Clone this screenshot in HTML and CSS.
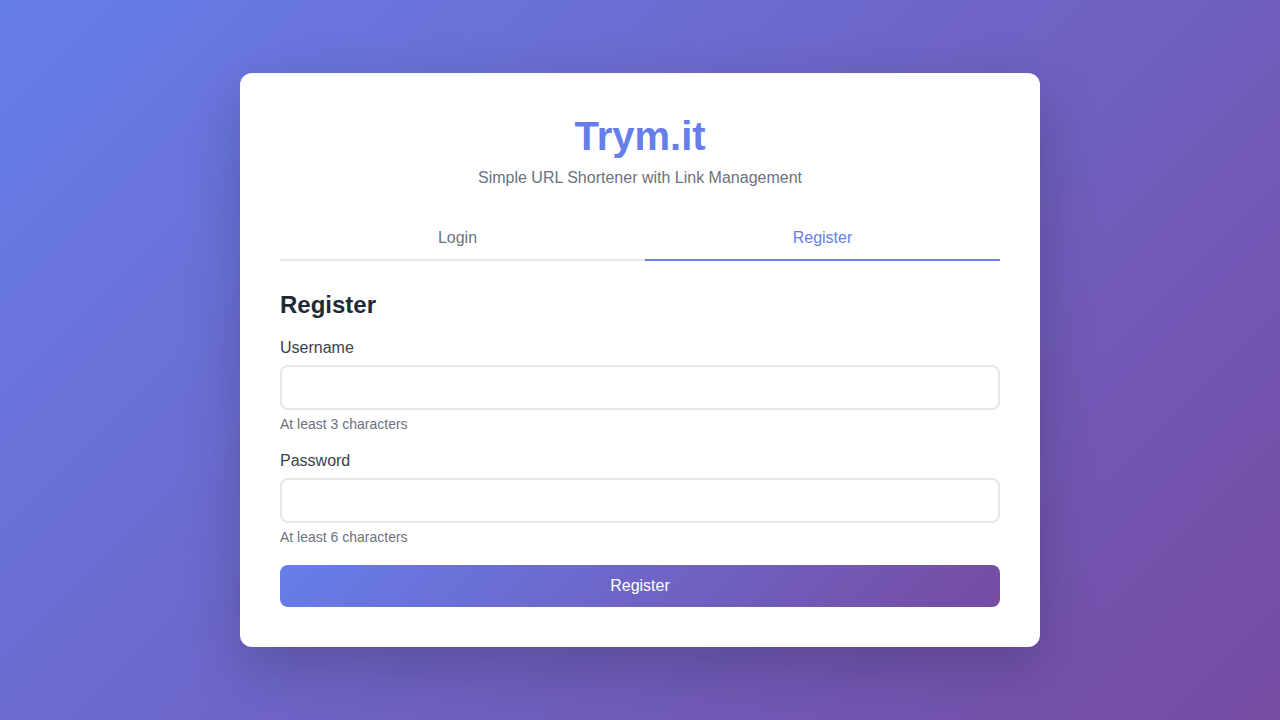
FILE: index.html
```html
<!DOCTYPE html>
<html lang="en">
<head>
<meta charset="utf-8">
<title>Trym.it</title>
<link rel="stylesheet" href="styles.css">
</head>
<body>
<main class="card">
  <header class="header">
    <h1 class="logo">Trym.it</h1>
    <p class="tagline">Simple URL Shortener with Link Management</p>
  </header>
  <nav class="tabs">
    <button class="tab">Login</button>
    <button class="tab active">Register</button>
  </nav>
  <form class="form">
    <h2 class="form-title">Register</h2>
    <div class="group">
      <label class="label" for="u">Username</label>
      <input class="input" id="u" type="text">
      <small class="hint">At least 3 characters</small>
    </div>
    <div class="group">
      <label class="label" for="p">Password</label>
      <input class="input" id="p" type="password">
      <small class="hint">At least 6 characters</small>
    </div>
    <button class="submit" type="button">Register</button>
  </form>
</main>
</body>
</html>
```
FILE: styles.css
```css
* { box-sizing: border-box; }
html, body { margin: 0; padding: 0; }
body {
  font-family: "Liberation Sans", Arial, sans-serif;
  min-height: 100vh;
  background: linear-gradient(135deg, #667eea 0%, #764ba2 100%);
  display: flex;
  align-items: center;
  justify-content: center;
}
.card {
  width: 800px;
  background: #fff;
  border-radius: 12px;
  padding: 40px;
  box-shadow: 0 20px 60px rgba(0, 0, 0, 0.2);
}
.header { text-align: center; margin-bottom: 30px; }
.logo {
  margin: 0 0 10px;
  font-size: 40px;
  font-weight: 700;
  color: #667eea;
  line-height: 46px;
}
.tagline { margin: 0; font-size: 16px; color: #6b7280; line-height: 18px; }
.tabs {
  display: flex;
  gap: 10px;
  border-bottom: 2px solid #e5e7eb;
  margin-bottom: 30px;
}
.tab {
  flex: 1;
  background: none;
  border: none;
  border-bottom: 2px solid transparent;
  margin-bottom: -2px;
  padding: 12px;
  font-family: inherit;
  font-size: 16px;
  line-height: 18px;
  color: #6b7280;
  cursor: pointer;
}
.tab.active { color: #667eea; border-bottom-color: #667eea; }
.form { display: flex; flex-direction: column; }
.form-title {
  margin: 0 0 20px;
  font-size: 24px;
  line-height: 28px;
  color: #1f2937;
}
.group { display: flex; flex-direction: column; margin-bottom: 20px; }
.label { font-size: 16px; line-height: 18px; color: #374151; margin-bottom: 8px; }
.input {
  height: 45px;
  border: 2px solid #e5e7eb;
  border-radius: 8px;
  padding: 12px;
  font-family: inherit;
  font-size: 16px;
  outline: none;
}
.hint { font-size: 14px; line-height: 16px; color: #6b7280; margin-top: 6px; }
.submit {
  height: 42px;
  border: none;
  border-radius: 8px;
  background: linear-gradient(135deg, #667eea 0%, #764ba2 100%);
  color: #fff;
  font-family: inherit;
  font-size: 16px;
  cursor: pointer;
}
```
